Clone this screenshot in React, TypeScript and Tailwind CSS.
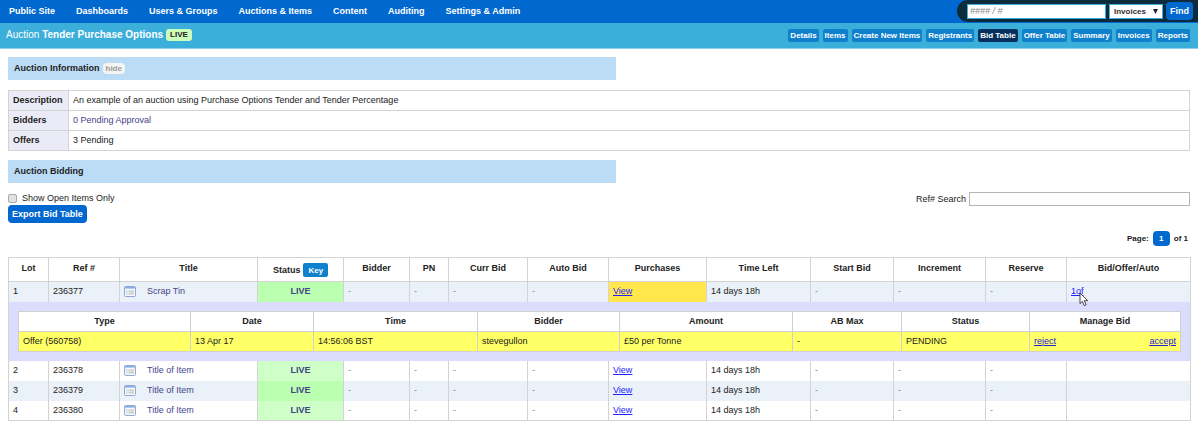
import { useState } from "react";

type Lot = {
  lot: number;
  ref: string;
  title: string;
  timeLeft: string;
  offers?: string;
};

const menu = [
  "Public Site",
  "Dashboards",
  "Users & Groups",
  "Auctions & Items",
  "Content",
  "Auditing",
  "Settings & Admin",
];

const tabs = [
  "Details",
  "Items",
  "Create New Items",
  "Registrants",
  "Bid Table",
  "Offer Table",
  "Summary",
  "Invoices",
  "Reports",
];

const lots: Lot[] = [
  { lot: 1, ref: "236377", title: "Scrap Tin", timeLeft: "14 days 18h", offers: "1of" },
  { lot: 2, ref: "236378", title: "Title of Item", timeLeft: "14 days 18h" },
  { lot: 3, ref: "236379", title: "Title of Item", timeLeft: "14 days 18h" },
  { lot: 4, ref: "236380", title: "Title of Item", timeLeft: "14 days 18h" },
];

const columns = [
  { label: "Lot", width: "w-[40px]" },
  { label: "Ref #", width: "w-[71px]" },
  { label: "Title", width: "w-[138px]" },
  { label: "Status", width: "w-[86px]" },
  { label: "Bidder", width: "w-[66px]" },
  { label: "PN", width: "w-[39px]" },
  { label: "Curr Bid", width: "w-[79px]" },
  { label: "Auto Bid", width: "w-[81px]" },
  { label: "Purchases", width: "w-[98px]" },
  { label: "Time Left", width: "w-[104px]" },
  { label: "Start Bid", width: "w-[83px]" },
  { label: "Increment", width: "w-[92px]" },
  { label: "Reserve", width: "w-[81px]" },
  { label: "Bid/Offer/Auto", width: "w-[124px]" },
];

const offerColumns = [
  { label: "Type", width: "w-[172px]" },
  { label: "Date", width: "w-[123px]" },
  { label: "Time", width: "w-[164px]" },
  { label: "Bidder", width: "w-[142px]" },
  { label: "Amount", width: "w-[173px]" },
  { label: "AB Max", width: "w-[109px]" },
  { label: "Status", width: "w-[128px]" },
  { label: "Manage Bid", width: "w-[151px]" },
];

const offer = ["Offer (560758)", "13 Apr 17", "14:56:06 BST", "stevegullon", "£50 per Tonne", "-", "PENDING"];

const cell = "border-x border-[#d3d3d3] px-1";

function ListIcon() {
  return (
    <svg width="12" height="11" viewBox="0 0 12 11" fill="none">
      <rect x="0.5" y="0.5" width="11" height="10" rx="1" fill="#f6f7f9" stroke="#8fa9d0" />
      <path d="M1 1h10v1.6H1z" fill="#86b0e6" />
      <path d="M2 4h1.5v5H2z" fill="#d5dbe5" />
      <path d="M4.5 4h5.5v5H4.5z" fill="#dedfe2" />
      <path d="M4.5 5.5h5.5M4.5 7.5h5.5" stroke="#c6c8cc" strokeWidth="0.7" />
    </svg>
  );
}

function Cursor() {
  return (
    <svg
      className="pointer-events-none absolute left-2 top-[7px] z-10"
      width="10"
      height="15"
      viewBox="0 0 10 15"
    >
      <path
        d="M1 1v10.6l2.4-2.2 1.8 4.2 1.9-.8-1.8-4.1h3.5L1 1Z"
        fill="white"
        stroke="#333"
        strokeWidth="0.9"
        strokeLinejoin="round"
      />
    </svg>
  );
}

function OfferTable() {
  return (
    <table className="w-full table-fixed border-collapse bg-white">
      <thead>
        <tr className="h-5">
          {offerColumns.map((col) => (
            <th key={col.label} className={`border border-[#d0d0d0] ${col.width}`}>
              {col.label}
            </th>
          ))}
        </tr>
      </thead>
      <tbody>
        <tr className="h-5 bg-[#ffff66]">
          {offer.map((value, index) => (
            <td key={index} className="border border-[#d0d0d0] px-1">
              {value}
            </td>
          ))}
          <td className="border border-[#d0d0d0] px-1">
            <div className="flex justify-between text-[#2222dd] underline">
              <a href="#reject">reject</a>
              <a href="#accept">accept</a>
            </div>
          </td>
        </tr>
      </tbody>
    </table>
  );
}

function LotRow({ item }: { item: Lot }) {
  const odd = item.lot % 2 === 1;

  return (
    <tr className={`h-5 ${odd ? "bg-[#ebf1f8]" : "bg-white"}`}>
      <td className={cell}>{item.lot}</td>
      <td className={cell}>{item.ref}</td>
      <td className={cell}>
        <div className="flex items-center gap-[11px]">
          <ListIcon />
          <a href="#item" className="text-[#444488]">
            {item.title}
          </a>
        </div>
      </td>
      <td
        className={`${cell} text-center font-bold text-[#444488] ${odd ? "bg-[#bbffb0]" : "bg-[#ceffc6]"}`}
      >
        LIVE
      </td>
      <td className={`${cell} text-[#888]`}>-</td>
      <td className={`${cell} text-[#888]`}>-</td>
      <td className={`${cell} text-[#888]`}>-</td>
      <td className={`${cell} text-[#888]`}>-</td>
      <td className={`${cell} ${item.offers ? "bg-[#ffe74c]" : ""}`}>
        <a href="#view" className="text-[#2222ff] underline">
          View
        </a>
      </td>
      <td className={cell}>{item.timeLeft}</td>
      <td className={`${cell} text-[#888]`}>-</td>
      <td className={`${cell} text-[#888]`}>-</td>
      <td className={`${cell} text-[#888]`}>-</td>
      <td className={cell}>
        {item.offers && (
          <div className="relative">
            <a href="#offers" className="text-[#2222ff] underline">
              {item.offers}
            </a>
            <Cursor />
          </div>
        )}
      </td>
    </tr>
  );
}

export default function App() {
  const [openOnly, setOpenOnly] = useState(false);
  const [search, setSearch] = useState("");

  const visibleLots = lots.filter((item) => item.ref.includes(search));

  return (
    <div className="bg-white font-['Liberation_Sans',Arial,sans-serif] text-[9px] leading-[13px] text-[#222]">
      <header>
        <div className="flex h-[23px] items-center justify-between bg-[#0068cf]">
          <nav className="flex gap-[21px] pl-[9px] font-bold text-white">
            {menu.map((label) => (
              <a key={label} href="#menu">
                {label}
              </a>
            ))}
          </nav>
          <form className="flex h-[22px] items-center gap-[3px] self-start rounded-l-full bg-[#0c2c3e] pl-[10px] pr-[5px]">
            <input
              aria-label="Invoice number"
              placeholder="#### / #"
              className="h-[15px] w-[139px] border border-[#3baeda] bg-white px-[2px] italic placeholder:text-[#888]"
            />
            <div className="relative">
              <select
                aria-label="Search in"
                className="block h-[15px] w-[54px] appearance-none border border-[#3baeda] bg-white pl-1 text-[8px] font-bold leading-[13px] text-[#333]"
              >
                <option>Invoices</option>
              </select>
              <svg className="pointer-events-none absolute right-[5px] top-[5px]" width="5" height="5" viewBox="0 0 5 5">
                <path d="M0 0h5L2.5 5Z" fill="#222" />
              </svg>
            </div>
            <button type="button" className="h-[18px] rounded-[4px] bg-[#0068cf] px-1 font-bold text-white">
              Find
            </button>
          </form>
        </div>
        <div className="flex h-[26px] items-center justify-between border-b border-[#8fd0ea] bg-[#3baeda] pl-[6px] pr-2">
          <h1 className="flex items-center gap-[3px] pb-[2px] text-[10px] text-white">
            <span>
              Auction <b>Tender Purchase Options</b>
            </span>
            <span className="rounded-[3px] bg-[#ccffbb] px-1 text-[8px] font-bold leading-[12px] text-[#222]">LIVE</span>
          </h1>
          <nav className="flex gap-1 text-[8px] font-bold leading-[13px] text-white">
            {tabs.map((label) => (
              <a
                key={label}
                href="#tab"
                className={`rounded-[2px] px-[2px] ${label === "Bid Table" ? "bg-[#05305e]" : "bg-[#0f80cc]"}`}
              >
                {label}
              </a>
            ))}
          </nav>
        </div>
      </header>

      <main className="px-2 pt-2">
        <h2 className="flex h-[23px] w-[608px] max-w-full items-center gap-[3px] bg-[#bcdcf6] pl-[6px] font-bold">
          Auction Information
          <button type="button" className="rounded-[4px] bg-[#f4f4f4] px-[3px] text-[8px] leading-[11px] text-[#999]">
            hide
          </button>
        </h2>

        <table className="mt-[10px] w-full border-collapse">
          <tbody>
            {[
              ["Description", "An example of an auction using Purchase Options Tender and Tender Percentage"],
              ["Bidders", "0 Pending Approval"],
              ["Offers", "3 Pending"],
            ].map(([name, value]) => (
              <tr key={name}>
                <th className="w-[60px] border border-[#d3d3d3] bg-[#ebebf7] px-1 py-[3px] text-left">{name}</th>
                <td className={`border border-[#d3d3d3] px-1 ${name === "Bidders" ? "text-[#444488]" : ""}`}>{value}</td>
              </tr>
            ))}
          </tbody>
        </table>

        <h2 className="mt-[9px] flex h-[23px] w-[608px] max-w-full items-center bg-[#bcdcf6] pl-[6px] font-bold">
          Auction Bidding
        </h2>

        <div className="mt-[9px] flex items-start justify-between">
          <div>
            <label className="flex items-center gap-[5px]">
              <input
                type="checkbox"
                checked={openOnly}
                onChange={(e) => setOpenOnly(e.target.checked)}
                className="size-[9px] appearance-none rounded-[2px] border border-[#aaa] bg-[#e2e2e2] checked:bg-[#0068cf]"
              />
              Show Open Items Only
            </label>
            <button type="button" className="block h-[18px] rounded-[4px] bg-[#0068cf] px-1 font-bold text-white">
              Export Bid Table
            </button>
          </div>
          <label className="flex items-center gap-[3px]">
            Ref# Search
            <input
              value={search}
              onChange={(e) => setSearch(e.target.value)}
              className="h-[14px] w-[221px] border border-[#b5b5b5] px-1"
            />
          </label>
        </div>

        <div className="mt-2 flex items-center justify-end gap-1 pr-[2px] text-[8px] font-bold">
          Page:
          <button type="button" className="h-[15px] w-[17px] rounded-[4px] bg-[#0068cf] text-white">
            1
          </button>
          of 1
        </div>

        <table className="mt-[11px] w-full table-fixed border-collapse border border-[#d3d3d3]">
          <thead>
            <tr className="h-6">
              {columns.map((col) => (
                <th key={col.label} className={`border border-[#d3d3d3] pb-[2px] ${col.width}`}>
                  {col.label === "Status" ? (
                    <span className="flex items-center justify-center gap-[3px] pt-[3px]">
                      Status
                      <button type="button" className="h-[14px] rounded-[2px] bg-[#0f80cc] px-[5px] text-[8px] text-white">
                        Key
                      </button>
                    </span>
                  ) : (
                    col.label
                  )}
                </th>
              ))}
            </tr>
          </thead>
          <tbody>
            {visibleLots.slice(0, 1).map((item) => (
              <LotRow key={item.lot} item={item} />
            ))}
            <tr className="bg-[#dcdcff]">
              <td colSpan={columns.length} className="px-[9px] py-[9px]">
                <OfferTable />
              </td>
            </tr>
            {visibleLots.slice(1).map((item) => (
              <LotRow key={item.lot} item={item} />
            ))}
          </tbody>
        </table>
      </main>
    </div>
  );
}
